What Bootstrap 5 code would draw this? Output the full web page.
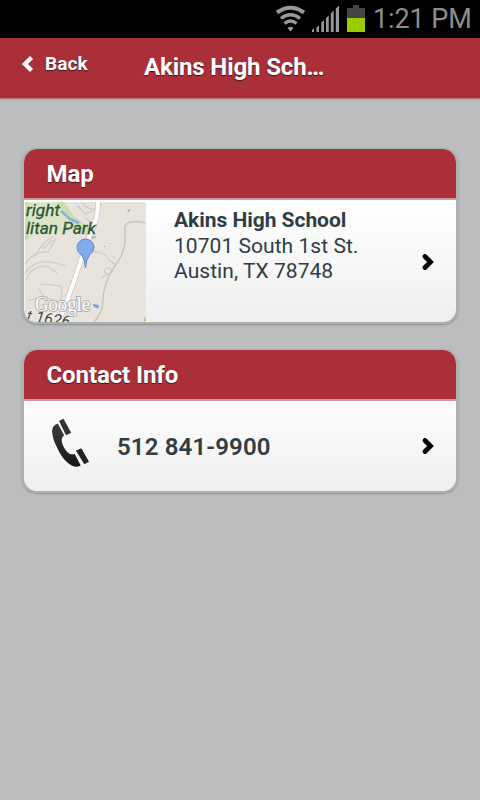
<!DOCTYPE html>
<html lang="en">
<head>
<meta charset="utf-8">
<meta name="viewport" content="width=device-width, initial-scale=1">
<title>Akins High School</title>
<link href="https://cdn.jsdelivr.net/npm/bootstrap@5.3.0/dist/css/bootstrap.min.css" rel="stylesheet">
<style>
body{background:#bbbdbf;font-family:Roboto,"Liberation Sans",sans-serif;color:#2f3d45;min-height:800px;overflow:hidden}
svg{display:block;flex:none}
.statusbar{height:38px;background:#000;color:#8c8c8c;padding-right:8px}
.clock{width:99px;font-size:27px;line-height:38px;font-weight:400;letter-spacing:-.1px;margin-left:6px;white-space:nowrap}
.topbar{height:61px;background:#ab2f39;border-bottom:1px solid #b0767c;box-shadow:0 1px 1px #aaacae;color:#fff;text-shadow:0 1px 1px #3d1a1c}
.back{width:144px;padding:0 0 7px 21px;gap:10px;font-size:19px;font-weight:700;letter-spacing:.1px;color:#fff;text-decoration:none}
.back svg{margin-bottom:2px}
.pagetitle{font-size:24px;line-height:28px;font-weight:700;letter-spacing:-.12px;margin:0 0 2px;white-space:nowrap}
main{padding:49px 22px 0;gap:25px}
.panel{border:2px solid #aeb0b2;border-top-width:1px;border-radius:15px;box-shadow:0 1px 2px #8b8d8f;overflow:hidden;background:linear-gradient(#fff 30%,#efefef);color:#2f3d45}
.panel-head{height:51px;background:#ab2f39;border-bottom:2px solid #cf9ba0;color:#fff;font-size:24px;line-height:50px;font-weight:700;letter-spacing:-.1px;padding:0 0 0 22.500px;text-shadow:0 1px 1px #3d1a1c}
.panel>.panel-head:first-child{border-radius:0}
.map-panel{height:176px}
.map-row{height:122px;padding:2px 0 0 1px}
.address{font-size:21px;line-height:25.500px;margin-left:28px;padding-top:6px}
.address strong{letter-spacing:-.04px}
.address .street{letter-spacing:.05px}
.contact-panel{height:144px}
.phone-row{height:90px;padding-left:27px}
.phone-icon{margin-bottom:6px}
.phone{font-size:24px;font-weight:600;letter-spacing:.15px;margin-left:26px;padding-top:2px}
.chev{margin-right:21px}
</style>
<script src="https://cdn.jsdelivr.net/npm/bootstrap@5.3.0/dist/js/bootstrap.bundle.min.js"></script>
</head>
<body>
<div class="statusbar d-flex justify-content-end align-items-center">
  <svg width="96" height="38" viewBox="271 0 96 38">
    <g fill="none" stroke="#999" stroke-width="4">
      <path d="M277 12.500Q290.500 3 304 12.500"/><path d="M281 18.500Q290.500 11 300 18.500" stroke-width="3.500"/><path d="M284.500 23.500Q290.500 18.500 296.500 23.500" stroke-width="3.200"/>
    </g>
    <path d="M287.500 28Q290.500 25.500 293.500 28L290.500 31.500z" fill="#999"/>
    <path fill="#999" d="M312 30l2-1.800V32h-2zM316.500 27.500l2.500-2V32h-2.500zM321.300 22.500l2.700-2.500v12h-2.700zM326 18l2.800-2.500V32H326zM330.800 13.500l2.900-3V32h-2.900zM335.800 8.500l3.200-3V32h-3.200z"/>
    <path fill="#444" d="M353 5h6v3h6v11h-18V8h6z"/><path fill="#9c0" d="M347 18h18v14h-18z"/>
  </svg>
  <span class="clock">1:21 PM</span>
</div>
<nav class="topbar d-flex align-items-center">
  <a href="#" class="back d-flex align-items-center">
    <svg width="14" height="18" viewBox="0 0 14 18"><path d="M10.500 3.500L4.500 9.500l6 6" fill="none" stroke="#3d1a1c" stroke-width="3.500" opacity=".4"/><path d="M10.500 2.500L4 9l6.500 6.500" fill="none" stroke="#fff" stroke-width="4.400"/></svg>
    <span>Back</span>
  </a>
  <h1 class="pagetitle">Akins High Sch…</h1>
</nav>
<main class="d-flex flex-column">
  <section class="card panel map-panel">
    <h2 class="panel-head card-header m-0">Map</h2>
    <div class="d-flex map-row">
      <svg class="map-tile" width="121" height="120" viewBox="25 202 121 120">
        <path fill="#e8e4dc" d="M25 202h121v120H25z"/>
        <path fill="#c9dfae" d="M25 202h4v37l-4 2zM56 202h8l10 14 13 10 4 7-5 2-12-7-12-13z"/>
        <path fill="#dbe6c7" d="M29 202h27l9 12 10 17-20 2-20 3-6 2z"/>
        <path d="M61 211l9 8 9 4" fill="none" stroke="#8baee3" stroke-width="2.500"/>
        <path d="M92 236q-5 3 4 1" stroke="#8baee3" stroke-width="1.500" fill="none"/>
        <g fill="none" stroke="#cfc9c3" stroke-width="1.200">
          <path d="M25 264q9-13 23-12l8-14M25 273q10-15 30-10l11 3M26 281q4-15 21-15l10 7M36 255q8-15 17-18M43 249l9-9M39 284q24 1 23 4l-1 13H47l-9-13M28 301q20-8 32 4M77 205l8 9 10-4M82 203q7 8 14 5M92 223l-7-5M94 252q11 0 15 8l7 5M104 271q4-6 8-1-3 9-8 1M102 278l6-5"/>
        </g>
        <path fill="none" stroke="#c5beb7" stroke-width="1.200" d="M146 223q-17-4-21 3v16q-2 15-11 25-11 18-11 34 0 11-9 21"/>
        <path fill="none" stroke="#cbc5bf" stroke-width="5.500" d="M98 202q0 18-7 30l-10 28q-6 19-13 38l-9 24"/>
        <path fill="none" stroke="#fff" stroke-width="4" d="M98 202q0 18-7 30l-10 28q-6 19-13 38l-9 24"/>
        <path fill="#7ba1e0" d="M93 304l6 1-1 4-5-3zM127 211l3-2-1 3zM104 246h1v1h-1zM113 257h1v1h-1z"/>
        <g font-family="Roboto, sans-serif" font-style="italic" font-weight="400" fill="#2d5439">
          <text x="26" y="216" font-size="17" textLength="34" lengthAdjust="spacingAndGlyphs" stroke="#2d5439" stroke-width=".3">right</text>
          <text x="26" y="233.500" font-size="17" textLength="70" lengthAdjust="spacingAndGlyphs" stroke="#2d5439" stroke-width=".3">litan Park</text>
          <text x="26" y="321" font-size="16" fill="#444" transform="rotate(8 26 321)" stroke="#f4f1ec" stroke-width="2" paint-order="stroke">t 1626</text>
        </g>
        <g font-family="Liberation Serif, serif" font-size="20">
          <text x="35" y="311" fill="#fff" stroke="#b3b0ab" stroke-width="2" paint-order="stroke" textLength="55" lengthAdjust="spacingAndGlyphs">Google</text>
        </g>
        <path d="M85.500 268q-.3-8-4-13-4.500-3-4.500-7.500a8.500 8.500 0 0 1 17 0q0 4.500-4.500 7.500-3.700 5-4 13z" fill="#82abec" stroke="#5f86c7"/>
        <path d="M144 321l1-5 1 5z" fill="#d9a958"/>
      </svg>
      <div class="address flex-grow-1"><strong>Akins High School</strong><br><span class="street">10701 South 1st St.</span><br><span class="street">Austin, TX 78748</span></div>
      <svg class="chev align-self-center" width="14" height="18" viewBox="0 0 14 18"><path d="M4 3.500L9.500 9 4 14.500" fill="none" stroke="#000" stroke-width="4.800" stroke-linecap="round"/></svg>
    </div>
  </section>
  <section class="card panel contact-panel">
    <h2 class="panel-head card-header m-0">Contact Info</h2>
    <div class="d-flex align-items-center phone-row">
      <svg class="phone-icon" width="40" height="50" viewBox="51 418 40 50">
        <defs><linearGradient id="ink" x2="0" y2="1"><stop stop-color="#3c3c3c"/><stop offset="1" stop-color="#151515"/></linearGradient></defs>
        <path fill="url(#ink)" d="M57.800 423.500Q52 425.500 52 431q.5 8 4.700 15.700 3 7 6.600 11.600 5 6 10 8 4 1.200 7.400-.8l-6-11.500q-4.500 1.500-7.500-2-4.500-5-5.500-11-.5-3.500 2.500-5.500z"/>
        <path fill="#333" d="M59 421l4.500-2.200 7.700 13.900-5.200 2.500z"/><path fill="#222" d="M76 450.700l5.300-2.400 7.700 13.400-4.700 2.500z"/>
      </svg>
      <span class="phone flex-grow-1">512 841-9900</span>
      <svg class="chev" width="14" height="18" viewBox="0 0 14 18"><path d="M4 3.500L9.500 9 4 14.500" fill="none" stroke="#000" stroke-width="4.800" stroke-linecap="round"/></svg>
    </div>
  </section>
</main>
</body>
</html>
